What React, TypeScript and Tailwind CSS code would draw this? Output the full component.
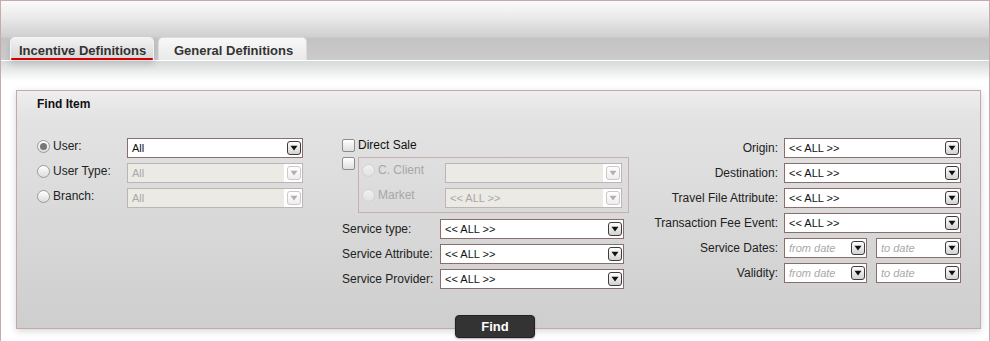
import React from "react";

const FONT = "font-['Liberation_Sans',Arial,sans-serif]";

function Arrow({ disabled }: { disabled?: boolean }) {
  return (
    <span
      className={`flex h-[14px] w-[14px] shrink-0 items-center justify-center rounded-[3px] border ${
        disabled
          ? "border-[#c9c9c9] bg-[linear-gradient(#ffffff,#eeeeee)]"
          : "border-[#3c3c3c] bg-[linear-gradient(#ffffff,#d2d2d2)]"
      }`}
    >
      <svg width="8" height="6" viewBox="0 0 8 6">
        <path d="M0.5 0.8h7L4 5.4z" fill={disabled ? "#b0b0b0" : "#111"} />
      </svg>
    </span>
  );
}

function Select({
  value,
  width,
  disabled,
}: {
  value: string;
  width: string;
  disabled?: boolean;
}) {
  return (
    <div
      className={`flex h-[20px] ${width} shrink-0 items-center border text-[11px] ${
        disabled
          ? "border-[#bfb3b3] bg-[#ebeae4] text-[#a8a8a8]"
          : "border-[#8a6d6d] bg-white text-[#111]"
      }`}
    >
      <span className="flex-1 truncate pl-[4px]">{value}</span>
      <span className={`flex h-full items-center pr-[1px] pl-[3px] ${disabled ? "bg-white" : ""}`}>
        <Arrow disabled={disabled} />
      </span>
    </div>
  );
}

function DateInput({ placeholder, width }: { placeholder: string; width: string }) {
  return (
    <div className={`flex h-[20px] ${width} items-center border border-[#8a6d6d] bg-white text-[11px]`}>
      <span className="flex-1 pl-[4px] italic text-[#a9a9a9]">{placeholder}</span>
      <span className="pr-[1px]">
        <Arrow />
      </span>
    </div>
  );
}

function Radio({ checked, disabled }: { checked?: boolean; disabled?: boolean }) {
  return (
    <span
      className={`flex h-[13px] w-[13px] shrink-0 items-center justify-center rounded-full border ${
        disabled
          ? "border-[#d2d2d2] bg-[linear-gradient(#f0f0f0,#e2e2e2)]"
          : "border-[#9a9a9a] bg-[linear-gradient(#ffffff,#dcdcdc)]"
      }`}
    >
      {checked && <span className="h-[7px] w-[7px] rounded-full bg-[#777]" />}
    </span>
  );
}

function Checkbox() {
  return (
    <span className="block h-[13px] w-[13px] shrink-0 rounded-[2px] border border-[#8c8c8c] bg-[linear-gradient(#ffffff,#dedede)]" />
  );
}

const RIGHT_ROWS = ["Origin:", "Destination:", "Travel File Attribute:", "Transaction Fee Event:"];

export default function App() {
  return (
    <div className={`${FONT} h-[341px] w-[990px] overflow-hidden border-x border-t border-[#c9aaaa] bg-white text-[12px] text-[#222]`}>
      {/* top bar with tabs */}
      <div className="flex h-[59px] items-end gap-[4px] bg-[linear-gradient(to_bottom,#fafafa_0%,#ececec_25%,#d4d4d4_55%,#cfcfcf_61%,#c3c3c3_63%,#cbcbcb_100%)] pl-[9px]">
        <div className="flex h-[23px] w-[144px] flex-col rounded-t-[5px] border border-b-0 border-[#f4f4f4] bg-[linear-gradient(#f2f2f2,#d6d6d6)] shadow-[0_5px_6px_rgba(0,0,0,0.12)]">
          <span className="pt-[5px] pl-[8px] text-[13px] leading-[15px] font-bold text-[#333]">Incentive Definitions</span>
          <span className="mt-auto h-[3px] rounded-full bg-[#d20000]" />
        </div>
        <div className="flex h-[23px] w-[149px] flex-col rounded-t-[5px] border border-b-0 border-[#dcdcdc] bg-[linear-gradient(#f8f8f8,#e9e9e9)]">
          <span className="pt-[5px] pl-[15px] text-[13px] leading-[15px] font-bold text-[#333]">General Definitions</span>
        </div>
      </div>

      <div className="bg-[linear-gradient(to_bottom,#ffffff_0px,#ffffff_1px,#d6d9da_1px,#ffffff_21px)] pt-[30px]">
        {/* Find Item panel */}
        <div className="ml-[15px] w-[965px] border border-[#c6a8a8] shadow-[0_2px_7px_rgba(0,0,0,0.16)]">
          <div className="flex h-[26px] items-center bg-[linear-gradient(#eeeeee,#e3e3e3)] pl-[20px] text-[12px] font-bold text-[#111]">
            Find Item
          </div>
          <div className="flex flex-col bg-[linear-gradient(#e3e3e3,#cecece)] pt-[21px]">
            <div className="flex pl-[20px] pr-[19px]">
              {/* left column */}
              <div className="flex w-[266px] flex-col gap-[5px]">
                {[
                  { label: "User:", checked: true, disabled: false },
                  { label: "User Type:", checked: false, disabled: true },
                  { label: "Branch:", checked: false, disabled: true },
                ].map((r) => (
                  <div key={r.label} className="flex items-start">
                    <div className="mt-[1px] flex w-[90px] items-center gap-[3px] leading-[14px]">
                      <Radio checked={r.checked} />
                      <span>{r.label}</span>
                    </div>
                    <Select value="All" width="w-[176px]" disabled={r.disabled} />
                  </div>
                ))}
              </div>

              {/* middle column */}
              <div className="ml-[39px] flex w-[287px] flex-col">
                <div className="flex h-[14px] items-center gap-[3px] leading-[14px]">
                  <Checkbox />
                  <span className="text-[#111]">Direct Sale</span>
                </div>
                <div className="mt-[5px] flex items-start gap-[3px]">
                  <Checkbox />
                  <div className="flex h-[56px] w-[271px] flex-col gap-[5px] border border-[#c9aeae] pt-[5px] pr-[6px] pl-[3px]">
                    {[
                      { label: "C. Client", value: "" },
                      { label: "Market", value: "<< ALL >>" },
                    ].map((r) => (
                      <div key={r.label} className="flex items-start">
                        <div className="flex w-[84px] items-center gap-[3px] leading-[14px] text-[#a7a7a7]">
                          <Radio disabled />
                          <span>{r.label}</span>
                        </div>
                        <Select value={r.value} width="w-[177px]" disabled />
                      </div>
                    ))}
                  </div>
                </div>
                <div className="mt-[6px] flex flex-col gap-[5px]">
                  {["Service type:", "Service Attribute:", "Service Provider:"].map((l) => (
                    <div key={l} className="flex items-center">
                      <span className="w-[98px]">{l}</span>
                      <Select value="<< ALL >>" width="w-[184px]" />
                    </div>
                  ))}
                </div>
              </div>

              {/* right column */}
              <div className="flex flex-1 flex-col items-end gap-[5px]">
                {RIGHT_ROWS.map((l) => (
                  <div key={l} className="flex items-center gap-[6px]">
                    <span>{l}</span>
                    <Select value="<< ALL >>" width="w-[177px]" />
                  </div>
                ))}
                {["Service Dates:", "Validity:"].map((l) => (
                  <div key={l} className="flex items-center gap-[6px]">
                    <span>{l}</span>
                    <div className="flex w-[177px] gap-[9px]">
                      <DateInput placeholder="from date" width="w-[83px]" />
                      <DateInput placeholder="to date" width="w-[85px]" />
                    </div>
                  </div>
                ))}
              </div>
            </div>

            <button
              type="button"
              className="relative z-10 mt-[26px] mb-[-10px] ml-[438px] flex h-[23px] w-[80px] items-center justify-center rounded-[4px] border border-[#222] bg-[#333] text-[13px] font-bold text-white shadow-[0_1px_2px_rgba(0,0,0,0.3)]"
            >
              Find
            </button>
          </div>
        </div>
      </div>
    </div>
  );
}
